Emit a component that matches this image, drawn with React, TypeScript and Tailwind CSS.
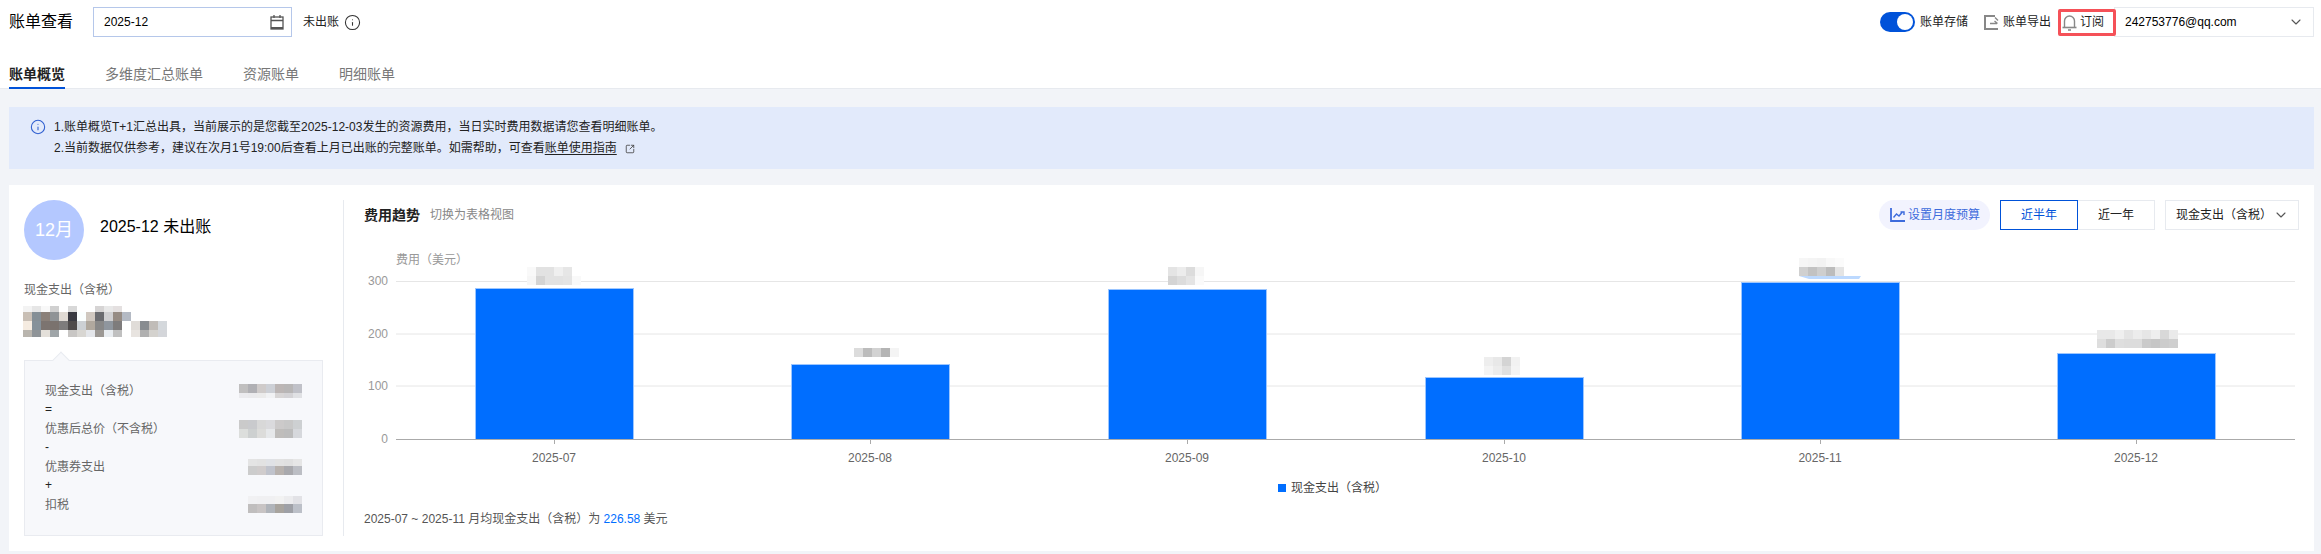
import { ChevronDown, Info, SquareArrowOutUpRight } from "lucide-react"

type MosaicProps = {
  rows: string[][]
  cell?: number
  heights: number[]
}

// pixelated patches that hide the amounts
function Mosaic({ rows, cell = 9, heights }: MosaicProps) {
  return (
    <div className="flex flex-col">
      {rows.map((row, i) => (
        <div key={i} className="flex">
          {row.map((c, j) => (
            <div key={j} style={{ width: cell, height: heights[i], background: c }} />
          ))}
        </div>
      ))}
    </div>
  )
}

const t = "transparent"

const summaryRows = [
  { label: "现金支出（含税）", op: "=", h: [9, 5], rows: [["#c0bfbf", "#b0b0b4", "#cfcbca", "#cdd0d6", "#bcb6b5", "#b8b6b6", "#c0c1c8"], ["#ebebee", "#eaeaec", "#ebebeb", "#f1f2f4", "#d8d6d6", "#d4d3d6", "#e0e1e4"]] },
  { label: "优惠后总价（不含税）", op: "-", h: [9, 9], rows: [["#cacaca", "#c9cacd", "#d8d8d8", "#dadadd", "#cccaca", "#c8c8c8", "#cdd0d2"], ["#dcdedc", "#cdd0d0", "#dcdcda", "#e6e8ea", "#bfbdbb", "#bcbcbc", "#d6d8dc"]] },
  { label: "优惠券支出", op: "+", h: [7, 9], rows: [["#e4e4e4", "#e2e2e2", "#e0e2e6", "#e2e2e2", "#e0e0e0", "#e6e6e6"], ["#cccccc", "#d0cccc", "#c0c3cc", "#b8b2ae", "#a9a9ad", "#bcbec4"]] },
  { label: "扣税", op: "", h: [8, 9], rows: [["#f1f1f3", "#f0f0f2", "#f0f0f2", "#f2f2f2", "#ececee", "#e2e2e6"], ["#c0bebe", "#c8c4c4", "#b0b4ba", "#a8a49e", "#9ea0a6", "#bcc0c8"]] },
]

const bars = [
  { x: 475, top: 288, month: "2025-07" },
  { x: 791, top: 364, month: "2025-08" },
  { x: 1108, top: 289, month: "2025-09" },
  { x: 1425, top: 377, month: "2025-10" },
  { x: 1741, top: 282, month: "2025-11" },
  { x: 2057, top: 353, month: "2025-12" },
]

const chartPatches = [
  { x: 527, y: 267, cols: [["#f9f9f9", "#e2e2e2", "#e2e2e2", "#efefef", "#e6e6e6", "#ffffff"], ["#f6f6f6", "#d4d4d4", "#e2e2e2", "#e2e2e2", "#e4e4e4", "#f9f9f9"]] },
  { x: 854, y: 348, cols: [["#dcdcdc", "#bcbcbc", "#d2d2d2", "#b4b4b4", "#f4f4f4"]] },
  { x: 1168, y: 267, cols: [["#e4e4e4", "#ececec", "#dcdcdc", "#f6f6f6"], ["#d4d4d4", "#dcdcdc", "#e4e4e4", "#fafafa"]] },
  { x: 1484, y: 357, cols: [["#eeeeee", "#e8e8e8", "#d4d4d4", "#f2f2f2"], ["#f4f4f4", "#ececec", "#e0e0e0", "#f4f4f4"]] },
  { x: 1799, y: 258, cols: [["#f6f6f6", "#f4f4f4", "#f2f2f2", "#f8f8f8", "#fbfbfb"], ["#d0d0d0", "#c2c2c2", "#cecece", "#bcbcbc", "#e4e4e4"]] },
  { x: 2097, y: 330, cols: [["#e8e8e8", "#e8e8e8", "#efefef", "#e4e4e4", "#ececec", "#e6e6e6", "#eeeeee", "#d8d8d8", "#eaeaea"], ["#dedede", "#cccccc", "#dedede", "#dcdcdc", "#dcdcdc", "#cacaca", "#c6c6c6", "#cccccc", "#cfcfcf"]] },
]

function BarChart() {
  return (
    <svg width="1940" height="258" viewBox="364 245 1940 258" className="block mt-[15px]">
      <text x="396" y="260" fontSize="12" fill="#999999" dominantBaseline="central">费用（美元）</text>
      {[281.5, 334, 386].map((y) => (
        <line key={y} x1="396" x2="2295" y1={y} y2={y} stroke="#e6e6e6" />
      ))}
      {[["300", 281], ["200", 334], ["100", 386], ["0", 439]].map(([v, y]) => (
        <text key={v} x="388" y={y} fontSize="12" fill="#999999" textAnchor="end" dominantBaseline="central">{v}</text>
      ))}
      {bars.map((b) => (
        <g key={b.month}>
          <rect x={b.x + 0.5} y={b.top + 0.5} width="158" height={439 - b.top} fill="#006eff" stroke="#9cc6ff" />
          <line x1={b.x + 79.5} x2={b.x + 79.5} y1="439" y2="444" stroke="#aaaaaa" />
          <text x={b.x + 79} y="458" fontSize="12" fill="#666666" textAnchor="middle" dominantBaseline="central">{b.month}</text>
        </g>
      ))}
      <line x1="396" x2="2295" y1="439.5" y2="439.5" stroke="#aaaaaa" />
      {chartPatches.map((p) =>
        p.cols.map((row, i) =>
          row.map((c, j) => <rect key={`${p.x}-${i}-${j}`} x={p.x + j * 9} y={p.y + i * 9} width="9" height="9" fill={c} />),
        ),
      )}
      <path d="M1799 276h62l-2 3h-50z" fill="#bcd9ff" />
      <rect x="1278" y="484" width="8" height="8" fill="#006eff" />
      <text x="1291" y="488" fontSize="12" fill="#444444" dominantBaseline="central">现金支出（含税）</text>
    </svg>
  )
}

export default function App() {
  return (
    <div className="min-h-[554px] bg-[#f2f4f8] font-['Liberation_Sans','Noto_Sans_CJK_SC',sans-serif] text-xs text-[#333]">
      {/* Header */}
      <header className="h-[89px] bg-white border-b border-[#e7eaef]">
        <div className="flex items-center pl-[9px] pr-[7px] pt-[7px]">
          <h1 className="text-base font-normal text-black leading-[30px]">账单查看</h1>
          <div className="ml-5 w-[199px] h-[30px] border border-[#b5c7ea] flex items-center justify-between pl-[10px] pr-[7px]">
            <span className="text-black">2025-12</span>
            <svg width="14" height="16" viewBox="0 0 14 16" fill="none" stroke="#555" strokeWidth="1.3">
              <rect x="1" y="3" width="12" height="12" />
              <path d="M1 6.5h12M4 1v3M10 1v3" />
              <path d="M1 14h12" strokeWidth="2" />
            </svg>
          </div>
          <span className="ml-[11px] text-[#222]">未出账</span>
          <Info className="ml-[5px] w-[17px] h-[17px] text-[#333]" strokeWidth={1.5} />

          <div className="ml-auto flex items-center">
            <div className="relative w-[35px] h-5 rounded-full bg-[#0052d9]">
              <div className="absolute right-[2px] top-[2px] w-4 h-4 rounded-full bg-white" />
            </div>
            <span className="ml-[5px] text-[#222]">账单存储</span>
            <svg className="ml-4" width="15" height="15" viewBox="0 0 15 15" fill="none" stroke="#888" strokeWidth="2">
              <path d="M11 1H1v13h13" />
              <path d="M11 2.5L14 5.5M6 8.5h7M10.5 6l3 2.5" strokeWidth="1.4" />
            </svg>
            <span className="ml-[4px] text-[#222]">账单导出</span>
            <div className="ml-[7px] -mr-[2px] z-10 w-[58px] h-[27px] border-[3px] border-[#f55158] rounded-[2px] flex items-center pl-[1px]">
              <svg width="15" height="17" viewBox="0 0 15 17" fill="none" stroke="#888" strokeWidth="1.4">
                <path d="M2.5 13V7a5 5 0 0 1 10 0v6" />
                <path d="M0.5 13.5h14" strokeWidth="1.6" />
                <path d="M6 16h3" strokeWidth="1.6" />
              </svg>
              <span className="ml-[3px] text-[#222]">订阅</span>
            </div>
            <div className="w-[200px] h-[30px] border border-[#e7eaef] flex items-center justify-between pl-[10px] pr-[9px] text-black">
              <span>242753776@qq.com</span>
              <ChevronDown className="w-4 h-4 text-[#555]" strokeWidth={1.6} />
            </div>
          </div>
        </div>
        <nav className="mt-[22px] px-[9px] flex gap-10 text-sm">
          <a className="h-[30px] leading-[30px] border-b-2 border-[#0052d9] font-bold text-[#222]">账单概览</a>
          <a className="h-[30px] leading-[30px] text-[#777]">多维度汇总账单</a>
          <a className="h-[30px] leading-[30px] text-[#777]">资源账单</a>
          <a className="h-[30px] leading-[30px] text-[#777]">明细账单</a>
        </nav>
      </header>

      {/* Notice */}
      <div className="mt-[18px] mx-[7px] ml-[9px] h-[62px] bg-[#e2eafb] flex pl-[21px] pt-[10px]">
        <Info className="mt-[2px] w-[16px] h-[16px] text-[#2f5fd0]" strokeWidth={1.6} />
        <div className="ml-[8px] leading-[21px] text-[#222]">
          <p>1.账单概览T+1汇总出具，当前展示的是您截至2025-12-03发生的资源费用，当日实时费用数据请您查看明细账单。</p>
          <p className="flex items-center">
            2.当前数据仅供参考，建议在次月1号19:00后查看上月已出账的完整账单。如需帮助，可查看
            <span className="underline underline-offset-2">账单使用指南</span>
            <SquareArrowOutUpRight className="ml-[8px] w-[10px] h-[10px] text-[#444]" />
          </p>
        </div>
      </div>

      {/* Overview card */}
      <section className="mt-[16px] ml-[9px] mr-[7px] h-[366px] bg-white flex py-[15px]">
        <div className="w-[334px] pl-[15px] flex-none">
          <div className="flex">
            <div className="w-[60px] h-[60px] rounded-full bg-[#b4c8ff] flex items-center justify-center text-lg text-white">12月</div>
            <div className="ml-4 mt-[17px] text-base leading-5 text-black">2025-12 未出账</div>
          </div>
          <div className="mt-[21px] leading-[18px] text-[#666]">现金支出（含税）</div>
          <div className="mt-[7px] -ml-[1px]">
            <Mosaic
              heights={[6, 9, 9, 7]}
              rows={[
                ["#f3f3f3", "#e6e6e6", "#f8f8f8", "#d0d0d0", t, "#d8d8d8", t, t, "#d6d4d4", "#e8e8e8", "#e4e0e0", t, t, t, t, t],
                ["#c9bfb5", "#858f96", "#8a8079", "#8f9396", "#e0dad4", "#3a3a42", "#fbffff", "#d0c8c0", "#6b6c70", "#d0d0d2", "#968c84", "#b4bac4", t, t, t, t],
                ["#f5ebe0", "#85919a", "#7c7470", "#7a726e", "#7e7c7c", "#4f4b4b", "#ccd0d4", "#b0a89e", "#888888", "#8f969e", "#7e7c7c", t, "#e0dcd8", "#888c90", "#c0bcb8", "#d4d8dc"],
                ["#b9b5ae", "#8f9498", "#e4e0da", "#9fa5a8", t, "#c8c6c4", "#d8d6d2", "#e4e6ea", "#9c9894", "#e8ecf0", "#c0c0c0", t, "#e8e4e0", "#b0b0b0", "#d4d2ce", "#d4d6da"],
              ]}
            />
          </div>
          <div className="relative mt-[23px] w-[299px] h-[176px] bg-[#f7f8fb] border border-[#e9ebf0] pl-5 pr-5 pt-[20px]">
            <div className="absolute -top-[7px] left-[30px] w-3 h-3 rotate-45 bg-[#f7f8fb] border-l border-t border-[#e9ebf0]" />
            {summaryRows.map((r) => (
              <div key={r.label}>
                <div className="flex items-center justify-between h-[19px] text-[#666]">
                  <span>{r.label}</span>
                  <Mosaic rows={r.rows} heights={r.h} />
                </div>
                {r.op && <div className="h-[19px] leading-[19px] text-[#222]">{r.op}</div>}
              </div>
            ))}
          </div>
        </div>

        {/* Trend */}
        <div className="flex-1 border-l border-[#e7eaef] pl-5">
          <div className="flex items-center h-[30px] pr-[15px]">
            <span className="text-sm font-bold text-[#222]">费用趋势</span>
            <a className="ml-[10px] text-[#888]">切换为表格视图</a>
            <div className="ml-auto h-[30px] w-[111px] rounded-full bg-[#f2f3fe] flex items-center pl-[11px] text-[#3d6bdc]">
              <svg width="15" height="14" viewBox="0 0 15 14" fill="none" stroke="currentColor">
                <path d="M1 0v13h14" strokeWidth="1.8" />
                <path d="M3.5 9.5l3-3.5 2.5 2 3-3.5M10.5 4H14v3" strokeWidth="1.4" />
              </svg>
              <span className="ml-[3px]">设置月度预算</span>
            </div>
            <div className="ml-[10px] flex h-[30px]">
              <div className="w-[78px] border border-[#0052d9] text-[#0052d9] flex items-center justify-center">近半年</div>
              <div className="w-[77px] border border-l-0 border-[#e7eaef] text-[#222] flex items-center justify-center">近一年</div>
            </div>
            <div className="ml-[10px] w-[134px] h-[30px] border border-[#e7eaef] flex items-center justify-between pl-[10px] pr-[9px] text-[#222]">
              <span>现金支出（含税）</span>
              <ChevronDown className="w-4 h-4 text-[#555]" strokeWidth={1.6} />
            </div>
          </div>
          <BarChart />
          <p className="mt-[7px] leading-[18px] text-[#555]">
            2025-07 ~ 2025-11 月均现金支出（含税）为 <span className="text-[#006eff]">226.58</span> 美元
          </p>
        </div>
      </section>
    </div>
  )
}
